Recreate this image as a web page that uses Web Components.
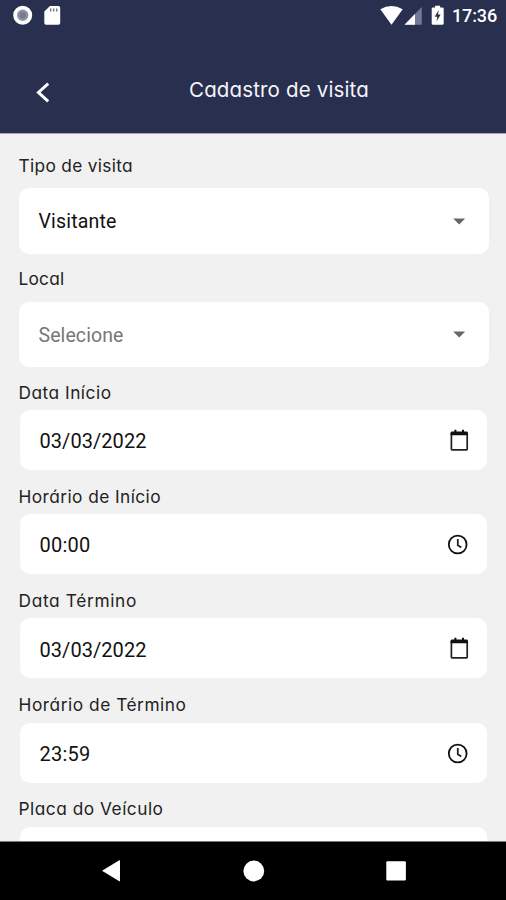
<!DOCTYPE html>
<html lang="pt-BR">
<head>
<meta charset="utf-8">
<title>Cadastro de visita</title>
<style>
  html, body {
    margin: 0;
    height: 100%;
  }

  body {
    overflow: hidden;
    background: #f1f1f1;
  }
</style>
</head>
<body>
<visit-screen>
  <status-bar slot="top" time="17:36"></status-bar>
  <app-header slot="top"><fit-text width="178">Cadastro de visita</fit-text></app-header>

  <form-field kind="select" label="Tipo de visita" label-width="112.5" width="76">Visitante</form-field>
  <form-field kind="select" label="Local" label-width="44" width="83" placeholder>Selecione</form-field>
  <form-field class="first-date" kind="date" label="Data Início" label-width="91" width="105">03/03/2022</form-field>
  <form-field kind="time" label="Horário de Início" label-width="140.5" width="49">00:00</form-field>
  <form-field kind="date" label="Data Término" label-width="116.5" width="105">03/03/2022</form-field>
  <form-field kind="time" label="Horário de Término" label-width="166" width="49">23:59</form-field>
  <form-field kind="text" label="Placa do Veículo" label-width="143"></form-field>

  <nav-buttons slot="bottom"></nav-buttons>
</visit-screen>

<script>
// Text that spreads its letters to fill a given width
class FitText extends HTMLElement {
  constructor() {
    super();
    const shadow = this.attachShadow({ mode: 'open' });
    shadow.innerHTML = `
      <style>
        :host { display: inline-block; white-space: nowrap; }
      </style>
      <span><slot></slot></span>
    `;
  }

  connectedCallback() {
    const width = parseFloat(this.getAttribute('width'));
    const count = this.textContent.length;
    if (!width || count < 2) return;
    const span = this.shadowRoot.querySelector('span');
    const natural = span.getBoundingClientRect().width;
    // side bearings take about 2px
    span.style.letterSpacing = (width + 2 - natural) / count + 'px';
  }
}

class StatusBar extends HTMLElement {
  constructor() {
    super();
    const shadow = this.attachShadow({ mode: 'open' });
    shadow.innerHTML = `
      <style>
        :host {
          display: flex;
          justify-content: space-between;
          height: 32px;
          background: #292f4f;
          color: #fff;
          font: 500 18px/32px Roboto, sans-serif;
        }
        .group { display: flex; }
        .group:last-child { padding-right: 9px; }
        svg { display: block; }
      </style>
      <div class="group">
        <svg width="70" height="32" viewBox="0 0 70 32">
          <circle cx="22.7" cy="15.3" r="7.6" fill="#8e91a5" stroke="#fff" stroke-width="3.8"/>
          <circle cx="22.7" cy="15.3" r="3.2" fill="#777b92"/>
          <path d="M50 6h8.5q1.7 0 1.7 1.7V23q0 1.7-1.7 1.7h-12.5q-1.7 0-1.7-1.7V11.5z" fill="#fff"/>
          <path d="M50.7 8.5v3M53.7 8.5v3M56.7 8.5v3" stroke="#747687" stroke-width="1.4"/>
        </svg>
      </div>
      <div class="group">
        <svg width="72" height="32" viewBox="380.5 0 72 32">
          <path d="M380.8 9.2Q392 2.8 403.2 9.2L392 24.7z" fill="#fff"/>
          <path d="M422.3 7v17.8H405z" fill="#747991"/>
          <path d="M415.5 14v10.8H405z" fill="#fff"/>
          <path d="M435.6 7.4V5.8h5v1.6h2.2q1.4 0 1.4 1.4v14.6q0 1.4-1.4 1.4h-9.2q-1.4 0-1.4-1.4V8.8q0-1.4 1.4-1.4z" fill="#fff"/>
          <path d="M439.2 10l-4 6.7h2.6l-.8 4.8 4.2-7h-2.7z" fill="#292f4f"/>
        </svg>
        <fit-text width="43">${this.getAttribute('time')}</fit-text>
      </div>
    `;
  }
}

class AppHeader extends HTMLElement {
  constructor() {
    super();
    const shadow = this.attachShadow({ mode: 'open' });
    shadow.innerHTML = `
      <style>
        :host {
          display: grid;
          grid-template-columns: 86px 1fr 34px;
          height: 101px;
          border-bottom: 1px solid #a5a7b3;
          background: #292f4f;
          color: #f5f5f8;
          font: 400 20.5px/30px Inter, "Open Sans", sans-serif;
          font-feature-settings: "cv11";
        }
        svg { margin-top: 44px; }
        .title { padding-top: 43px; text-align: center; }
      </style>
      <svg width="86" height="32" viewBox="0 0 86 32">
        <path d="M48.2 7.6L38.4 16.4l9.8 9" fill="none" stroke="#fff" stroke-width="2.9"/>
      </svg>
      <div class="title"><slot></slot></div>
    `;
  }
}

const ICONS = {
  select: '<path d="M10.2 9.5h12l-6 6z" fill="#666"/>',
  date: `<path d="M10.4 5v16.2q0 .6.6.6h14.6q.6 0 .6-.6V5" fill="none" stroke="#222" stroke-width="1.7"/>
         <path d="M9.6 7.2V4.8q0-1.3 1.3-1.3h2.5V1.8h2v1.7h5.6V1.8h2v1.7h2.3Q27 3.5 27 4.8v2.4z" fill="#111"/>`,
  time: `<circle cx="16.7" cy="12.5" r="8.9" fill="none" stroke="#111" stroke-width="1.8"/>
         <path d="M16.8 7v6.2l3.5 2.3" fill="none" stroke="#222" stroke-width="1.8"/>`,
  text: ''
};

class FormField extends HTMLElement {
  constructor() {
    super();
    const kind = this.getAttribute('kind');
    const width = this.getAttribute('width');
    const shadow = this.attachShadow({ mode: 'open' });
    shadow.innerHTML = `
      <style>
        :host {
          display: block;
          flex: none;
          padding: 0 19px 0 20px;
          color: #111;
          font: 400 20px/24px Roboto, sans-serif;
        }
        :host([kind="select"]) {
          padding: 0 17.5px 0 19px;
          font-size: 19.5px;
        }
        :host(.first-date) { margin-top: -1.6px; }
        .label {
          height: 29.4px;
          padding-top: 14.8px;
          margin-left: -1.5px;
          color: #222;
          font: 400 17.3px/24px Inter, "Open Sans", sans-serif;
          font-feature-settings: "cv11";
        }
        :host([kind="select"]) .label {
          height: 34.5px;
          padding-top: 13px;
          margin-left: -0.5px;
        }
        .box {
          box-sizing: border-box;
          display: flex;
          align-items: center;
          justify-content: space-between;
          height: 60px;
          padding: 0 18px 0 19.5px;
          border-radius: 10px;
          background: #fff;
        }
        :host([kind="select"]) .box { height: 65.8px; }
        :host([placeholder]) .box { color: #777; }
        .box fit-text { padding-top: 2.4px; }
        svg { display: block; }
      </style>
      <div class="label"><fit-text width="${this.getAttribute('label-width')}">${this.getAttribute('label')}</fit-text></div>
      <div class="box">
        <fit-text width="${width || ''}"></fit-text>
        <svg width="28" height="24" viewBox="0 0 28 24">${ICONS[kind]}</svg>
      </div>
    `;
    shadow.querySelector('.box fit-text').textContent = this.textContent;
  }
}

class NavButtons extends HTMLElement {
  constructor() {
    super();
    const shadow = this.attachShadow({ mode: 'open' });
    shadow.innerHTML = `
      <style>
        :host {
          display: grid;
          grid-template-columns: 182px 143px 1fr;
          align-items: center;
          height: 58px;
          border-top: 1px solid #777;
          background: #000;
          color: #fff;
        }
        svg { display: block; fill: currentColor; }
      </style>
      <svg width="182" height="58" viewBox="0 0 182 58"><path d="M102 28.8l17.3-10.5q.7-.3.7.5v20q0 .8-.7.5z"/></svg>
      <svg width="143" height="58" viewBox="182 0 143 58"><circle cx="253.8" cy="29" r="10.4"/></svg>
      <svg width="181" height="58" viewBox="325 0 181 58"><rect x="386.3" y="19.3" width="19.6" height="19.3" rx="1"/></svg>
    `;
  }
}

class VisitScreen extends HTMLElement {
  constructor() {
    super();
    const shadow = this.attachShadow({ mode: 'open' });
    shadow.innerHTML = `
      <style>
        :host {
          display: flex;
          flex-direction: column;
          width: 506px;
          height: 900px;
          background: #f1f1f1;
        }
        main {
          flex: 1;
          min-height: 0;
          display: flex;
          flex-direction: column;
          overflow: hidden;
          padding-top: 6.8px;
        }
      </style>
      <slot name="top"></slot>
      <main><slot></slot></main>
      <slot name="bottom"></slot>
    `;
  }
}

customElements.define('visit-screen', VisitScreen);
customElements.define('status-bar', StatusBar);
customElements.define('app-header', AppHeader);
customElements.define('form-field', FormField);
customElements.define('nav-buttons', NavButtons);
customElements.define('fit-text', FitText);
</script>
</body>
</html>
